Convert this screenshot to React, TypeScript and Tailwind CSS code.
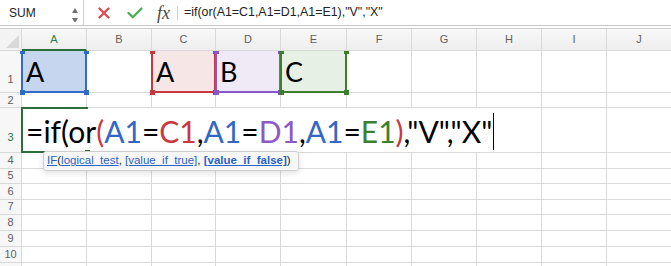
import React from "react";

const cols = ["A", "B", "C", "D", "E", "F", "G", "H", "I", "J"];
const line = "border-r border-b border-[#d9d9d9]";
const smallRows = [4, 5, 6, 7, 8, 9, 10];

type RefProps = { border: string; square: string };

// coloured outline drawn over a referenced cell
const RefBox: React.FC<RefProps> = ({ border, square }) => (
  <div className={`absolute -left-px top-0 -right-px -bottom-px border-l-2 border-r-2 border-b-2 ${border}`}>
    <span className={`absolute -left-[3.5px] top-0 w-[5px] h-[3px] ${square}`} />
    <span className={`absolute -right-[3.5px] top-0 w-[5px] h-[3px] ${square}`} />
    <span className={`absolute -left-[3.5px] -bottom-[3.5px] w-[5px] h-[5px] ${square}`} />
    <span className={`absolute -right-[3.5px] -bottom-[3.5px] w-[5px] h-[5px] ${square}`} />
  </div>
);

const RowHead: React.FC<{ n?: number; pb: string; active?: boolean }> = ({ n, pb, active }) => (
  <div
    className={`${line} bg-[#f7f7f7] flex items-end justify-center text-[11px] leading-[13px] ${pb} ${
      active ? "text-[#2b7a3f]" : "text-[#5f5f5f]"
    }`}
  >
    {n}
  </div>
);

const Blank: React.FC = () => <div className={line} />;

export default function App() {
  return (
    <div className="relative w-[671px] h-[266px] overflow-hidden bg-white font-['Liberation_Sans',Arial,sans-serif]">
      {/* formula bar */}
      <div className="flex h-[26px] border-b border-[#c6c6c6] bg-white">
        <div className="w-[84px] border-r border-[#cfcfcf] flex items-center justify-between pl-[9px] pr-[4px]">
          <span className="text-[12px] text-[#222]">SUM</span>
          <svg width="8" height="18" viewBox="0 0 8 18">
            <path d="M4 4 L7 9 L1 9 Z" fill="#707070" />
            <path d="M1 14 L7 14 L4 19 Z" fill="#707070" />
          </svg>
        </div>
        <div className="flex items-center ml-[14px] gap-[17px]">
          <svg width="12" height="12" viewBox="0 0 12 12">
            <path d="M1.5 1.5 L10.5 10.5 M10.5 1.5 L1.5 10.5" stroke="#df4a4f" strokeWidth="2.3" strokeLinecap="round" />
          </svg>
          <svg width="16" height="12" viewBox="0 0 16 12">
            <path d="M1.5 6 L5.8 10.2 L14.5 1.5" stroke="#4daa55" strokeWidth="2.3" fill="none" strokeLinecap="round" strokeLinejoin="round" />
          </svg>
        </div>
        <span className="ml-[14px] mt-[2px] font-['Liberation_Serif',serif] italic text-[18px] leading-[22px] text-[#4a4a4a]">
          fx
        </span>
        <div className="ml-[7px] mt-[6px] w-px h-[14px] bg-[#d0d0d0]" />
        <div className="ml-[6px] flex items-center text-[12.4px] text-[#222]">=if(or(A1=C1,A1=D1,A1=E1),"V","X"</div>
      </div>
      <div className="h-[3px] border-b border-[#cfcfcf]" />

      {/* sheet */}
      <div className="grid grid-cols-[22px_65px_65px_64px_65px_66px_65px_65px_65px_65px_65px] grid-rows-[22px_42px_15px_45px_16px_15px_16px_15px_16px_16px_16px_16px]">
        {/* header row */}
        <div className={`${line} bg-[#f3f3f3] relative`}>
          <svg className="absolute right-[2px] bottom-[2px]" width="13" height="13" viewBox="0 0 13 13">
            <path d="M13 0 L13 13 L0 13 Z" fill="#d9d9d9" />
          </svg>
        </div>
        {cols.map((c) => (
          <div
            key={c}
            className={`bg-gradient-to-b from-[#f8f8f8] to-[#eeeeee] border-r border-[#d9d9d9] flex items-center justify-center text-[11px] ${
              c === "A" ? "border-b-2 border-b-[#2b6e3c] text-[#2b7a3f]" : "border-b text-[#5f5f5f]"
            }`}
          >
            {c}
          </div>
        ))}

        {/* row 1 */}
        <RowHead n={1} pb="pb-[6px]" />
        <div className={`${line} relative bg-[#c6d6ee] flex items-center pl-[4px] pt-[2px] font-['Lato',sans-serif] text-[27px] text-black`}>
          A
          <RefBox border="border-[#2f6bc8]" square="bg-[#2f6bc8]" />
        </div>
        <Blank />
        <div className={`${line} relative bg-[#f6e6e6] flex items-center pl-[4px] pt-[2px] font-['Lato',sans-serif] text-[27px] text-black`}>
          A
          <RefBox border="border-[#c8373d]" square="bg-[#c8373d]" />
        </div>
        <div className={`${line} relative bg-[#f0eaf7] flex items-center pl-[4px] pt-[2px] font-['Lato',sans-serif] text-[27px] text-black`}>
          B
          <RefBox border="border-[#8a57c6]" square="bg-[#8a57c6]" />
        </div>
        <div className={`${line} relative bg-[#e6f0e4] flex items-center pl-[4px] pt-[2px] font-['Lato',sans-serif] text-[27px] text-black`}>
          C
          <RefBox border="border-[#3b7f2c]" square="bg-[#3b7f2c]" />
        </div>
        {cols.slice(5).map((c) => (
          <Blank key={c} />
        ))}

        {/* row 2 */}
        <RowHead n={2} pb="pb-0" />
        {cols.map((c) => (
          <Blank key={c} />
        ))}

        {/* row 3: cell in edit mode */}
        <RowHead n={3} pb="pb-[8px]" active />
        <div className={`${line} col-span-8 relative flex items-center pl-[4px] pt-[2px] font-['Lato',sans-serif] text-[30px] text-black whitespace-nowrap`}>
          <span>=if(or</span>
          <span className="text-[#c9393e]">(</span>
          <span className="text-[#3467c5]">A1</span>
          <span>=</span>
          <span className="text-[#c9393e]">C1</span>
          <span>,</span>
          <span className="text-[#3467c5]">A1</span>
          <span>=</span>
          <span className="text-[#8c59c5]">D1</span>
          <span>,</span>
          <span className="text-[#3467c5]">A1</span>
          <span>=</span>
          <span className="text-[#3c7f2e]">E1</span>
          <span className="text-[#c9393e]">)</span>
          <span>,"V","X"</span>
          <span className="ml-[1px] w-px h-[37px] bg-black" />
          <div className="absolute -left-px -top-px w-[67px] -bottom-px border-t-2 border-l-2 border-[#2b6e3c]">
            <span className="absolute left-0 bottom-0 w-[61px] h-[2px] bg-[#2b6e3c]" />
            <span className="absolute -right-[2px] -bottom-[2px] w-[5px] h-[5px] bg-[#2b6e3c]" />
          </div>
        </div>
        <Blank />
        <Blank />

        {/* rows 4-10 */}
        {smallRows.map((n) => (
          <React.Fragment key={n}>
            <RowHead n={n} pb="pb-px" />
            {cols.map((c) => (
              <Blank key={c} />
            ))}
          </React.Fragment>
        ))}

        {/* partly visible row 11 */}
        <RowHead pb="pb-px" />
        {cols.map((c) => (
          <Blank key={c} />
        ))}
      </div>

      {/* function tooltip */}
      <div className="absolute left-[43px] top-[151px] w-[256px] h-[20px] flex items-center pl-[3px] bg-[#f7f7f7] border border-[#cfcfcf] rounded-[3px] shadow-[0_2px_6px_rgba(0,0,0,0.12)] text-[11.5px] text-[#222] whitespace-nowrap">
        <span className="text-[#2a63c8] underline">IF</span>(
        <span className="text-[#2a63c8] underline">logical_test</span>,&nbsp;
        <span className="text-[#2a63c8] underline">[value_if_true]</span>,&nbsp;
        <span className="text-[#2a63c8] underline font-bold">[value_if_false]</span>)
      </div>
    </div>
  );
}
